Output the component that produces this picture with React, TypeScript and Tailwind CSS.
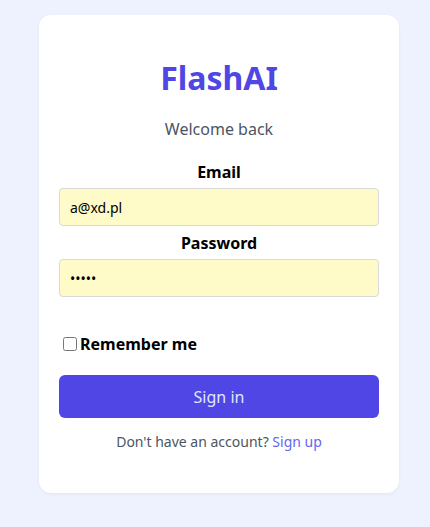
import React from "react";

export default function App() {
  return (
    <div className="min-h-[527px] w-[430px] bg-[#eef2ff] pl-[39px] pt-[15px] pb-[35px]" style={{ fontFamily: '"Noto Sans", sans-serif' }}>
      <div className="w-[360px] rounded-xl bg-white px-5 pt-[43px] pb-[41px] shadow-[0_1px_3px_rgba(0,0,0,0.06)]">
        <h1 className="text-center text-[32px] leading-[40px] font-bold text-[#4f46e5]">FlashAI</h1>
        <p className="mt-[19px] text-center text-[16px] leading-6 text-[#4b5563]">Welcome back</p>
        <form className="mt-[19px] flex flex-col" onSubmit={(e) => e.preventDefault()}>
          <label className="text-center text-[16px] leading-6 font-bold text-black">Email</label>
          <input
            className="mt-1 h-[38px] w-full rounded-[4px] border border-[#d9d9d9] bg-[#fefbc8] px-[10px] text-[14px] text-black outline-none"
            defaultValue="a@xd.pl"
          />
          <label className="mt-[5px] text-center text-[16px] leading-6 font-bold text-black">Password</label>
          <input
            type="password"
            className="mt-1 h-[38px] w-full rounded-[4px] border border-[#d9d9d9] bg-[#fefbc8] px-[10px] text-[14px] text-black outline-none"
            defaultValue="abcde"
          />
          <div className="mt-[35px] flex items-center">
            <input type="checkbox" className="ml-1 mr-[3px] h-[14px] w-[14px]" />
            <span className="text-[16px] leading-6 font-bold text-black">Remember me</span>
          </div>
          <button className="mt-[19px] h-[43px] w-full rounded-md bg-[#4f46e5] text-[16px] text-[#e0e7ff]">Sign in</button>
          <p className="mt-[14px] text-center text-[14px] leading-5 text-[#4b5563]">
            Don't have an account? <a className="text-[#6366f1]">Sign up</a>
          </p>
        </form>
      </div>
    </div>
  );
}
